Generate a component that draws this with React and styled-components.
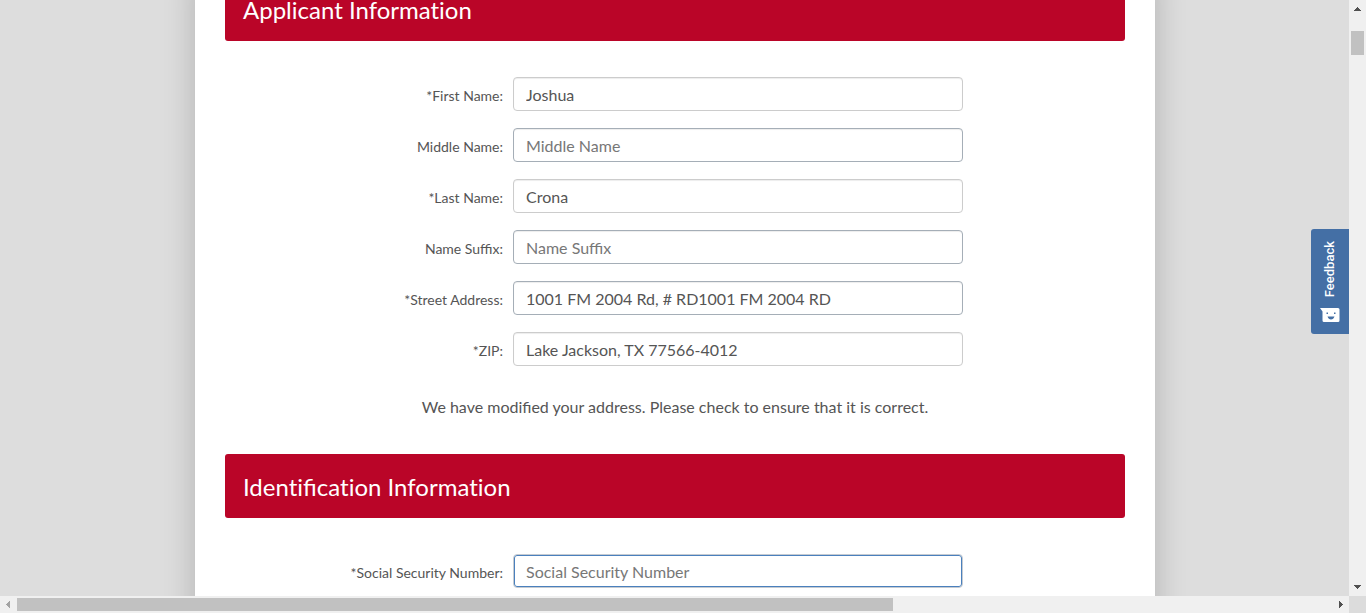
import React from "react";
import styled, { createGlobalStyle } from "styled-components";

const GlobalStyle = createGlobalStyle`
  *, *::before, *::after { box-sizing: border-box; }
  body {
    margin: 0;
    background: #ddd;
    color: #555;
    font-family: Lato, "Liberation Sans", sans-serif;
    font-size: 16px;
    line-height: 24px;
  }
`;

const Window = styled.div`
  display: grid;
  grid-template-columns: minmax(0, 1fr) 17px;
  grid-template-rows: minmax(0, 1fr) 17px;
  height: 100vh;
`;

const Viewport = styled.main`
  position: relative;
  overflow: hidden;
  padding-left: 1px;
  background: #ddd;
`;

const Sheet = styled.form`
  width: 100%;
  max-width: 960px;
  min-height: 150vh;
  margin: -23px auto 0;
  padding: 0 30px;
  background: #fff;
  box-shadow: 0 0 30px rgba(0, 0, 0, 0.2);
`;

const SectionTitle = styled.h2`
  margin: 0 0 36px;
  padding: 19px 18px 17px;
  border-radius: 3px;
  background: #ba0528;
  color: #fff;
  font-size: 24px;
  font-weight: 400;
  font-variant-ligatures: none;
  line-height: 28px;
`;

const Ligature = styled.span`
  font-variant-ligatures: common-ligatures;
`;

const Row = styled.div`
  display: grid;
  grid-template-columns: 278px minmax(0, 450px);
  column-gap: 10px;
  margin-bottom: 17px;
`;

const Label = styled.label`
  padding-top: 8px;
  font-size: 14px;
  line-height: 22px;
  text-align: right;
`;

const borders = { plain: "#ccc", slate: "#a5aeb7", focus: "#c5cbd2" };

const Input = styled.input`
  width: 100%;
  height: 34px;
  padding: 6px 12px;
  border: 1px solid ${(p) => borders[p.$tone]};
  border-radius: 4px;
  outline: 0;
  background: #fff;
  box-shadow: ${(p) =>
    p.$tone === "focus"
      ? "inset 0 0 0 1px #4a80bd"
      : "inset 0 1px 1px rgba(0, 0, 0, 0.075)"};
  color: #555;
  font: inherit;
  line-height: 20px;
  &::placeholder { color: #777; opacity: 1; }
`;

const Notice = styled.p`
  margin: 0;
  padding: 12px 0 35px;
  text-align: center;
`;

const FeedbackTab = styled.button`
  position: absolute;
  top: 229px;
  right: 0;
  display: flex;
  flex-direction: column;
  align-items: center;
  justify-content: space-between;
  width: 38px;
  height: 105px;
  padding: 12px 0 11px;
  border: 0;
  border-radius: 3px 0 0 3px;
  background: #446fa5;
  color: #fff;
  font: 500 13px/18px Roboto, sans-serif;
`;

const FeedbackText = styled.span`
  writing-mode: vertical-rl;
  transform: rotate(180deg);
`;

const Bar = styled.div`
  display: flex;
  flex-direction: ${(p) => (p.$vertical ? "column" : "row")};
  background: #f0f0f0;
`;

const ArrowButton = styled.button`
  display: grid;
  flex: 0 0 17px;
  place-items: center;
  width: 17px;
  height: 17px;
  padding: 0;
  border: 0;
  background: transparent;
  color: ${(p) => (p.$dim ? "#a3a3a3" : "#505050")};
`;

const Track = styled.div`
  display: flex;
  flex: 1;
  flex-direction: ${(p) => (p.$vertical ? "column" : "row")};
  padding: ${(p) => (p.$vertical ? "14px 2px 0" : "2px 0")};
`;

const Thumb = styled.div`
  flex: 0 0 ${(p) => p.$size};
  background: #c1c1c1;
`;

const Corner = styled.div`
  background: #dcdcdc;
`;

const arrows = {
  up: "M8 7h1v1h1v1h1v1h1v1H5v-1h1V9h1V8h1z",
  down: "M5 6h7v1h-1v1h-1v1H9v1H8V9H7V8H6V7H5z",
  left: "M10 5v7H9v-1H8v-1H7V9H6V8h1V7h1V6h1V5z",
  right: "M7 5h1v1h1v1h1v1h1v1h-1v1H9v1H8v1H7z",
};

function Arrow({ direction, dim }) {
  return (
    <ArrowButton type="button" aria-label={`Scroll ${direction}`} $dim={dim}>
      <svg width="17" height="17" viewBox="0 0 17 17" shapeRendering="crispEdges">
        <path fill="currentColor" d={arrows[direction]} />
      </svg>
    </ArrowButton>
  );
}

function Field({ id, label, value, placeholder, tone = "slate" }) {
  return (
    <Row>
      <Label htmlFor={id}>{label}</Label>
      <Input id={id} type="text" defaultValue={value} placeholder={placeholder} $tone={tone} />
    </Row>
  );
}

export default function App() {
  return (
    <>
      <GlobalStyle />
      <Window>
        <Viewport>
          <Sheet>
            <SectionTitle>Applicant Information</SectionTitle>
            <Field id="first" label="*First Name:" value="Joshua" tone="plain" />
            <Field id="middle" label="Middle Name:" placeholder="Middle Name" />
            <Field id="last" label="*Last Name:" value="Crona" tone="plain" />
            <Field id="suffix" label="Name Suffix:" placeholder="Name Suffix" />
            <Field id="street" label="*Street Address:" value="1001 FM 2004 Rd, # RD1001 FM 2004 RD" />
            <Field id="zip" label="*ZIP:" value="Lake Jackson, TX 77566-4012" tone="plain" />
            <Notice>We have modified your address. Please check to ensure that it is correct.</Notice>
            <SectionTitle>
              Identi<Ligature>fi</Ligature>cation Information
            </SectionTitle>
            <Field id="ssn" label="*Social Security Number:" placeholder="Social Security Number" tone="focus" />
          </Sheet>
          <FeedbackTab type="button">
            <FeedbackText>Feedback</FeedbackText>
            <svg width="20" height="16" viewBox="0 0 20 16" aria-hidden="true">
              <path fill="#fff" d="M0 1 18 1Q19.500 1 19.500 2.500V13.500Q19.500 15 18 15H4Q2.500 15 2.500 13.500V4.500Z" />
              <path fill="#446fa5" d="M6.500 5.500h1.500v1.500H6.500zM14 5.500h1.500v1.500H14zM7.500 9.500h7Q13.500 12.500 11 12.500T7.500 9.500Z" />
            </svg>
          </FeedbackTab>
        </Viewport>
        <Bar $vertical>
          <Arrow direction="up" />
          <Track $vertical>
            <Thumb $size="24px" />
          </Track>
          <Arrow direction="down" />
        </Bar>
        <Bar>
          <Arrow direction="left" dim />
          <Track>
            <Thumb $size="66.6%" />
          </Track>
          <Arrow direction="right" />
        </Bar>
        <Corner />
      </Window>
    </>
  );
}
